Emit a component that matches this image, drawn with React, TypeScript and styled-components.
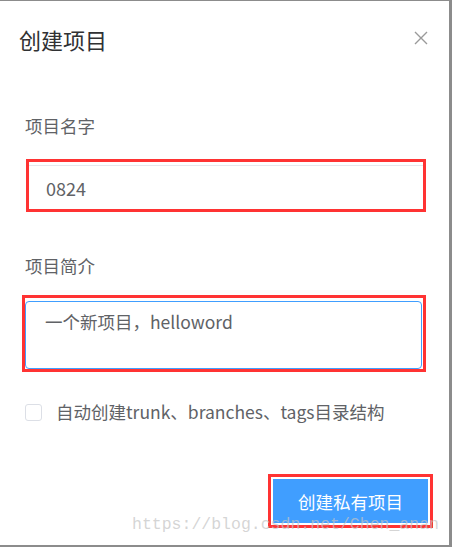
import React from "react";
import styled, { createGlobalStyle } from "styled-components";

const Global = createGlobalStyle`
  html, body {
    margin: 0;
    padding: 0;
    background: #ffffff;
  }
  * {
    box-sizing: border-box;
  }
`;

export default function App() {
  return (
    <>
      <Global />
      <Dialog>
        <Header>
          <Title>创建项目</Title>
          <Close aria-label="close">
            <svg width="14" height="14" viewBox="0 0 14 14">
              <path d="M1 1L13 13M13 1L1 13" stroke="#9a9a9a" strokeWidth="1.4" fill="none" />
            </svg>
          </Close>
        </Header>

        <Body>
          <Label>项目名字</Label>
          <Mark $pad="3px 0 0 0" $top={21}>
            <NameInput readOnly defaultValue="0824" />
          </Mark>

          <Label $top={42}>项目简介</Label>
          <Mark $pad="3px 1px 0 0" $left={-4} $top={17}>
            <Desc readOnly defaultValue="一个新项目，helloword" />
          </Mark>

          <CheckRow>
            <Box />
            <span>自动创建trunk、branches、tags目录结构</span>
          </CheckRow>

          <Footer>
            <Mark $pad="2px">
              <Primary>创建私有项目</Primary>
            </Mark>
          </Footer>
        </Body>

        <Watermark>https://blog.csdn.net/Chen_anan</Watermark>
      </Dialog>
    </>
  );
}

const Dialog = styled.div`
  position: relative;
  width: 452px;
  height: 547px;
  background: #ffffff;
  border-top: 1px solid #8c8c8c;
  border-right: 3px solid #8c8c8c;
  border-bottom: 2px solid #8c8c8c;
  font-family: "Noto Sans CJK SC", "Noto Sans", sans-serif;
  overflow: hidden;
`;

const Header = styled.div`
  display: flex;
  align-items: center;
  justify-content: space-between;
  padding: 20px 21px 0 19px;
  height: 56px;
`;

const Title = styled.div`
  font-size: 22px;
  line-height: 30px;
  color: #303133;
`;

const Close = styled.div`
  display: flex;
  width: 14px;
  height: 14px;
  margin-top: -2px;
`;

const Body = styled.div`
  display: flex;
  flex-direction: column;
  padding: 0 23px 0 26px;
`;

const Label = styled.div<{ $top?: number }>`
  margin-top: ${(p) => p.$top ?? 57}px;
  font-size: 17.5px;
  line-height: 24px;
  color: #606266;
  margin-left: -1px;
`;

const Mark = styled.div<{ $pad: string; $left?: number; $top?: number }>`
  border: 3px solid #ff3333;
  padding: ${(p) => p.$pad};
  margin-left: ${(p) => p.$left ?? 0}px;
  margin-top: ${(p) => p.$top ?? 0}px;
  display: flex;
`;

const NameInput = styled.input`
  flex: 1;
  height: 44px;
  border: none;
  border-top: 1px solid #e4e7ed;
  outline: none;
  padding: 0 0 0 17px;
  font-family: inherit;
  font-size: 18px;
  color: #606266;
  background: #fff;
`;

const Desc = styled.textarea`
  flex: 1;
  height: 68px;
  border: 1px solid #409eff;
  border-radius: 4px;
  outline: none;
  resize: none;
  padding: 8px 0 0 19px;
  font-family: inherit;
  font-size: 17.5px;
  line-height: 24px;
  color: #606266;
  background: #fff;
  overflow: hidden;
  display: block;
`;

const CheckRow = styled.div`
  display: flex;
  align-items: center;
  gap: 14px;
  margin-top: 28px;
  margin-left: -1px;
  font-size: 17.5px;
  line-height: 24px;
  color: #606266;
`;

const Box = styled.span`
  width: 17px;
  height: 17px;
  border: 1px solid #dcdfe6;
  border-radius: 3px;
  background: #fff;
  flex: none;
`;

const Footer = styled.div`
  display: flex;
  justify-content: flex-end;
  margin-top: 50px;
  margin-right: -7px;
`;

const Primary = styled.div`
  width: 155px;
  height: 44px;
  background: #409eff;
  color: #ffffff;
  font-size: 17.5px;
  display: flex;
  align-items: center;
  justify-content: center;
`;

const Watermark = styled.div`
  position: absolute;
  left: 132px;
  top: 514px;
  font-family: "Liberation Mono", monospace;
  font-size: 16.5px;
  line-height: 20px;
  color: rgba(195, 195, 195, 0.7);
  white-space: nowrap;
  pointer-events: none;
`;
